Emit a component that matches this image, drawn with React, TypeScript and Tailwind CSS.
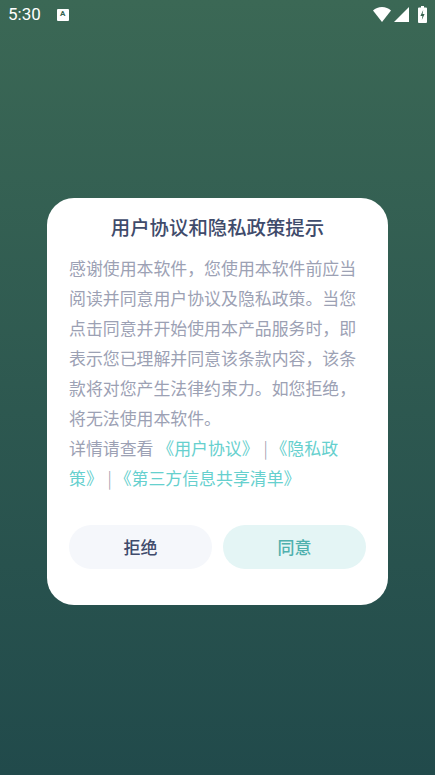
const cjk = "font-['Noto_Sans_CJK_SC','Noto_Sans',sans-serif]";

const StatusBar = () => {
  return (
    <div className="flex h-[29px] items-center justify-between pl-[8px] pr-[8px] text-white">
      <div className="flex items-center gap-[16px]">
        <span className="font-['Roboto',sans-serif] text-[17px] leading-none">5:30</span>
        <div className="flex h-[12px] w-[12px] items-start justify-center rounded-[1px] bg-white">
          <span className="font-['Roboto',sans-serif] text-[8px] font-bold leading-[10px] text-[#386350]">A</span>
        </div>
      </div>
      <div className="flex items-center gap-[3px]">
        <svg viewBox="0 0 18 15" className="h-[15px] w-[18px]" fill="white">
          <path d="M0 3.6C2.4 1.4 5.5 0 9 0s6.6 1.4 9 3.6L9 15z" />
        </svg>
        <svg viewBox="0 0 15 15" className="h-[15px] w-[15px]" fill="white">
          <path d="M15 0v15H0z" />
        </svg>
        <svg viewBox="0 0 9 17" className="ml-[6px] h-[17px] w-[9px]">
          <path
            fill="white"
            d="M3 0h3v1.5h2a1 1 0 0 1 1 1V16a1 1 0 0 1-1 1H1a1 1 0 0 1-1-1V2.5a1 1 0 0 1 1-1h2z"
          />
          <path fill="#386350" d="M5.2 4 2.4 10h2l-.6 4 2.8-6h-2z" />
        </svg>
      </div>
    </div>
  );
};

const Pipe = () => <span className="-mr-[1px] ml-[1px] inline-block text-[#8f94a8] font-light">|</span>;

export default function App() {
  return (
    <div className={`h-[775px] w-[435px] overflow-hidden bg-gradient-to-b from-[#3b6855] to-[#214a4b] ${cjk}`}>
      <StatusBar />

      <div className="ml-[47px] mt-[169px] h-[407px] w-[341px] rounded-[27px] bg-white px-[22px] pt-[14px]">
        <h1 className="text-center text-[19.4px] font-medium leading-[30px] text-[#3f4b6b]">
          用户协议和隐私政策提示
        </h1>

        <p className="mt-[11px] whitespace-nowrap text-[16.9px] leading-[30px] text-[#9ca1b4]">
          感谢使用本软件，您使用本软件前应当
          <br />
          阅读并同意用户协议及隐私政策。当您
          <br />
          点击同意并开始使用本产品服务时，即
          <br />
          表示您已理解并同意该条款内容，该条
          <br />
          款将对您产生法律约束力。如您拒绝，
          <br />
          将无法使用本软件。
          <br />
          详情请查看 <span className="text-[#66d0ce]">《用户协议》</span> <Pipe /> <span className="text-[#66d0ce]">《隐私政</span>
          <br />
          <span className="text-[#66d0ce]">策》</span> <Pipe /> <span className="text-[#66d0ce]">《第三方信息共享清单》</span>
        </p>

        <div className="mt-[32px] flex gap-[11px]">
          <button className="h-[44px] w-[143px] rounded-full bg-[#f5f7fb] text-[17px] font-medium text-[#3f4b6b]">
            拒绝
          </button>
          <button className="h-[44px] w-[143px] rounded-full bg-[#e4f5f5] text-[17px] font-medium text-[#4fb0ae]">
            同意
          </button>
        </div>
      </div>
    </div>
  );
}
